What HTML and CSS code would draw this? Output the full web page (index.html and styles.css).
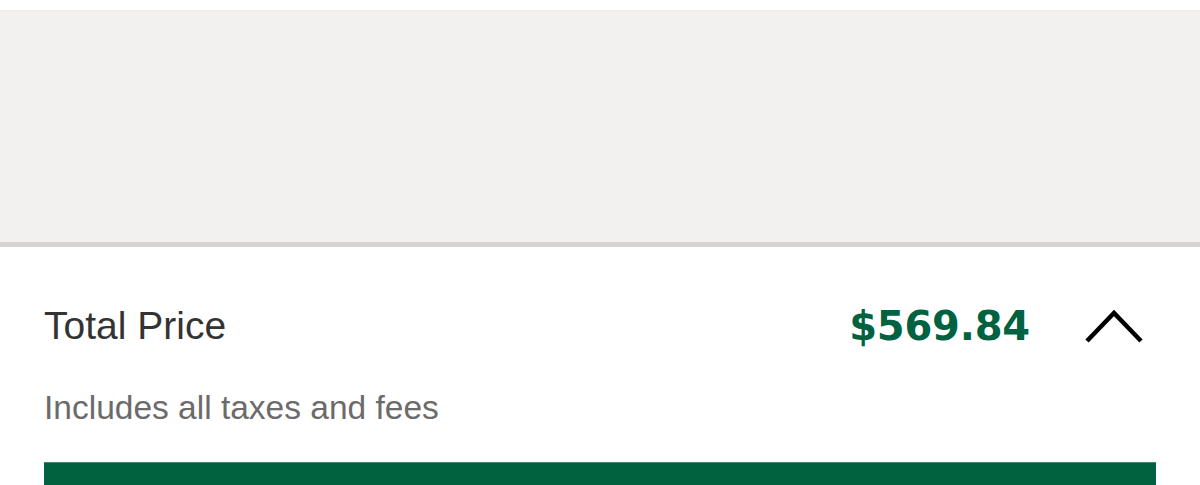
FILE: index.html
```html
<!DOCTYPE html>
<html lang="en">
<head>
  <meta charset="UTF-8">
  <meta name="viewport" content="width=device-width, initial-scale=1.0">
  <title>Checkout</title>
  <link rel="stylesheet" href="styles.css">
</head>
<body>
  <div class="sheet">
    <div class="panel"></div>
    <div class="summary">
      <div class="total-row">
        <span class="total-label">Total Price</span>
        <div class="total-right">
          <span class="total-price">$569.84</span>
          <button class="toggle" type="button" aria-label="Collapse price details">
            <svg width="60" height="36" viewBox="0 0 60 36">
              <polyline points="2,33 29,5 56,33" fill="none" stroke="#000" stroke-width="4.5"/>
            </svg>
          </button>
        </div>
      </div>
      <p class="note">Includes all taxes and fees</p>
      <button class="pay-btn" type="button" aria-label="Continue to payment"></button>
    </div>
  </div>
</body>
</html>
```

FILE: styles.css
```css
body {
  font-family: 'Liberation Sans', Arial, sans-serif;
  background-color: #ffffff;
  margin: 0;
  padding: 0;
  overflow: hidden;
}
.sheet {
  padding-top: 10px;
}
.panel {
  height: 231px;
  background-color: #f2f1ef;
  border-top: 1px solid #eeedea;
  border-bottom: 5px solid #d7d4cd;
}
.summary {
  padding: 0 44px;
}
.total-row {
  display: flex;
  justify-content: space-between;
  align-items: center;
  height: 60px;
  margin-top: 49px;
}
.total-label {
  font-size: 39px;
  color: #333333;
}
.total-right {
  display: flex;
  align-items: center;
  gap: 55px;
}
.total-price {
  font-family: 'DejaVu Sans', sans-serif;
  font-size: 40px;
  font-weight: bold;
  color: #006241;
  letter-spacing: -0.2px;
}
.toggle {
  background: none;
  border: none;
  padding: 0;
  margin-right: 11px;
  display: flex;
}
.note {
  margin: 33px 0 0;
  font-size: 33.5px;
  color: #6b6b6b;
}
.pay-btn {
  display: block;
  width: 100%;
  height: 80px;
  margin-top: 35px;
  background-color: #00623f;
  border: none;
  border-top: 1px solid #3f8a6c;
}
```
